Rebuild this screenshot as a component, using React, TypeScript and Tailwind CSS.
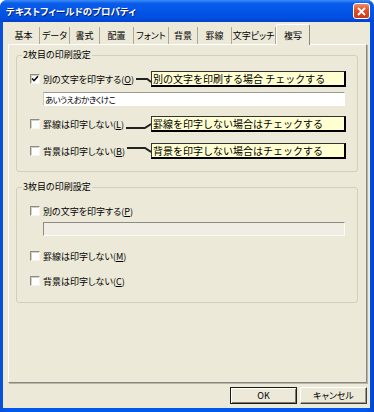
const tabs = [
  { label: "基本", w: "w-[32px]" },
  { label: "データ", w: "w-[30px]" },
  { label: "書式", w: "w-[30px]" },
  { label: "配置", w: "w-[34px]" },
  { label: "フォント", w: "w-[35px]" },
  { label: "背景", w: "w-[29px]" },
  { label: "罫線", w: "w-[34px]" },
  { label: "文字ピッチ", w: "w-[44px]" },
];

function Check({ checked = false }: { checked?: boolean }) {
  return (
    <span className="flex h-[10px] w-[10px] flex-none items-center justify-center border border-t-[#8c8b85] border-l-[#8c8b85] border-r-[#f4f3ee] border-b-[#f4f3ee] bg-white shadow-[inset_1px_1px_0_#d4d2c8]">
      {checked && (
        <svg width="8" height="8" viewBox="0 0 8 8">
          <path d="M1 3.5 L3 5.5 L7 1.2" fill="none" stroke="#111" strokeWidth="1.6" />
        </svg>
      )}
    </span>
  );
}

function Label({ text, key1 }: { text: string; key1: string }) {
  return (
    <span className="ml-[3px] whitespace-nowrap text-[9px] leading-none">
      {text}(<span className="underline underline-offset-1">{key1}</span>)
    </span>
  );
}

function Row({
  text,
  key1,
  checked,
  note,
  y1 = 8,
  y2 = 8,
}: {
  text: string;
  key1: string;
  checked?: boolean;
  note?: string;
  y1?: number;
  y2?: number;
}) {
  return (
    <div className={`flex items-center pl-[13px] pr-[11px] ${note ? "h-[16px]" : "h-[12px]"}`}>
      <Check checked={checked} />
      <Label text={text} key1={key1} />
      {note && (
        <>
          <svg className="ml-[2px] h-[16px] w-0 min-w-0 flex-1" viewBox="0 0 100 16" preserveAspectRatio="none">
            <polyline
              points={`0,${y1} 75,${y1} 100,${y2}`}
              fill="none"
              stroke="#222"
              strokeWidth="2"
              vectorEffect="non-scaling-stroke"
            />
          </svg>
          <div className="h-[16px] w-[195px] flex-none whitespace-nowrap border border-[#333] border-r-2 border-b-2 border-r-black border-b-black bg-[#FFFFD2] pl-[1px] text-[10px] leading-[13px] [font-feature-settings:normal]">
            {note}
          </div>
        </>
      )}
    </div>
  );
}

export default function App() {
  return (
    <div className="h-[412px] w-[374px] bg-white font-['Noto_Sans_CJK_JP','Noto_Sans',sans-serif] text-black [font-feature-settings:'palt']">
      <div className="flex h-full flex-col overflow-hidden rounded-t-[7px] bg-[linear-gradient(to_right,#0A4FD8,#0058EE_2%,#0058EE_98%,#0344CF)]">
        {/* title bar */}
        <div className="flex h-[22px] flex-none items-center bg-[linear-gradient(to_bottom,#3C8EF8_0%,#0A5DEA_15%,#0255E6_50%,#0150E0_80%,#0140CC_100%)] pl-[6px] pr-[4px]">
          <span className="flex-1 text-[9.5px] font-bold text-white [text-shadow:1px_1px_0_#0a1f6a]">
            テキストフィールドのプロパティ
          </span>
          <div className="flex h-[16px] w-[17px] items-center justify-center rounded-[3px] border border-white bg-[linear-gradient(to_bottom,#F08A6A,#E0502A_45%,#C8381A)]">
            <svg width="9" height="9" viewBox="0 0 9 9">
              <path d="M1 1 L8 8 M8 1 L1 8" stroke="#fff" strokeWidth="1.8" />
            </svg>
          </div>
        </div>

        {/* body */}
        <div className="mb-[4px] ml-[3px] mr-[4px] flex flex-1 flex-col bg-[#ECE9D8] pb-[4px] pl-[5px] pr-[3px] pt-[2px]">
          <div className="flex h-[20px] items-end">
            {tabs.map((t) => (
              <div
                key={t.label}
                className={`${t.w} flex h-[17px] items-center justify-center whitespace-nowrap border-r border-r-[#a9a79b] text-[9px] leading-none`}
              >
                {t.label}
              </div>
            ))}
            <div className="relative z-10 -mb-px flex h-[21px] w-[34px] items-center justify-center whitespace-nowrap rounded-t-[2px] border-l border-t border-r border-l-white border-t-white border-r-[#8a887c] bg-[#ECE9D8] text-[9px] leading-none">
              複写
            </div>
          </div>

          <div className="flex h-[339px] flex-none flex-col border border-t-white border-l-white border-r-[#8a887c] border-b-[#8a887c] pl-[7px] pr-[8px] pt-[4px] shadow-[1px_1px_0_#b8b6a8]">
            <fieldset className="rounded-[3px] border border-[#D0D0BF] pb-[12px]">
              <legend className="ml-[5px] px-[1px] text-[9px] leading-[12px]">2枚目の印刷設定</legend>
              <div className="pt-[10px]">
                <Row text="別の文字を印字する" key1="O" checked note="別の文字を印刷する場合 チェックする" y1={8} y2={11} />
                <div className="ml-[26px] mt-[5px] flex h-[14px] w-[302px] items-center border border-t-[#9c9b95] border-l-[#c9c7bd] border-r-white border-b-white bg-white pl-[1px] text-[8.5px] leading-none tracking-[-0.6px]">
                  あいうえおかきくけこ
                </div>
                <div className="mt-[10px]">
                  <Row text="罫線は印字しない" key1="L" note="罫線を印字しない場合はチェックする" y1={12} y2={8} />
                </div>
                <div className="mt-[11px]">
                  <Row text="背景は印字しない" key1="B" note="背景を印字しない場合はチェックする" y1={5} y2={9} />
                </div>
              </div>
            </fieldset>

            <fieldset className="mt-[9px] rounded-[3px] border border-[#D0D0BF] pb-[15px]">
              <legend className="ml-[5px] px-[1px] text-[9px] leading-[12px]">3枚目の印刷設定</legend>
              <div className="pt-[12px]">
                <Row text="別の文字を印字する" key1="P" />
                <div className="ml-[26px] mt-[5px] h-[14px] w-[302px] border border-t-[#8c8b85] border-l-[#8c8b85] border-r-[#fbfaf6] border-b-[#fbfaf6] bg-[#EFEDE4]" />
                <div className="mt-[14px]">
                  <Row text="罫線は印字しない" key1="M" />
                </div>
                <div className="mt-[13px]">
                  <Row text="背景は印字しない" key1="C" />
                </div>
              </div>
            </fieldset>
          </div>

          <div className="flex justify-end gap-[3px] pt-[4px]">
            <button className="flex h-[17px] w-[67px] items-center justify-center border border-[#1a1a1a] bg-[#ECE9D8] text-[9px] leading-none shadow-[inset_1px_1px_0_#fff,inset_-1px_-1px_0_#7a786c]">
              OK
            </button>
            <button className="flex h-[17px] w-[67px] items-center justify-center border border-t-white border-l-white border-r-[#404040] border-b-[#404040] bg-[#ECE9D8] text-[9px] leading-none shadow-[inset_-1px_-1px_0_#9a988c]">
              キャンセル
            </button>
          </div>
        </div>
      </div>
    </div>
  );
}
